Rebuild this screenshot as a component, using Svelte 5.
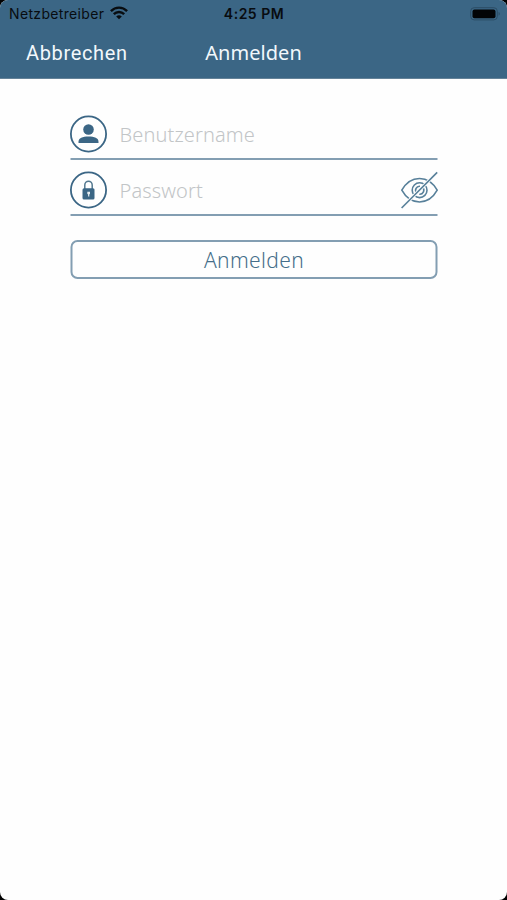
<script>
  let username = $state('');
  let password = $state('');
</script>

<div class="device">
  <main class="screen">
    <header>
      <div class="status">
        <div class="carrier">
          <span class="carrier-name">Netzbetreiber</span>
          <svg width="18" height="14" viewBox="0 0 18 14" fill="none" stroke="#080c10" stroke-width="2.4">
            <path d="M.9 5.1C5.5.5 12.5.5 17.1 5.1" />
            <path d="M3.8 8.2C6.8 5.3 11.2 5.3 14.2 8.2" />
            <path d="M6.2 10.5Q9 8.1 11.8 10.5L9 13.2Z" fill="#080c10" stroke="none" />
          </svg>
        </div>
        <span class="time">4:25 PM</span>
        <svg class="battery" width="31" height="14" viewBox="0 0 31 14">
          <rect x=".7" y=".7" width="26.6" height="12.2" rx="3.5" fill="none" stroke="#2c4d65" />
          <rect x="2.5" y="2.5" width="23" height="8.8" rx="2" fill="#020406" />
          <path d="M28.7 4.8q2 2 0 4Z" fill="#29485e" />
        </svg>
      </div>
      <nav>
        <button class="cancel">Abbrechen</button>
        <h1>Anmelden</h1>
      </nav>
    </header>

    <form>
      <label class="field">
        <svg width="38" height="38" viewBox="0 0 38 38">
          <circle cx="19" cy="19" r="17.6" fill="none" stroke="#3b6685" stroke-width="1.8" />
          <circle cx="19" cy="14.5" r="5.3" fill="#3b6685" />
          <path d="M9 28v-1.2c0-3.8 4-5.3 10-5.3s10 1.5 10 5.3V28Z" fill="#3b6685" />
        </svg>
        <input type="text" placeholder="Benutzername" bind:value={username} />
      </label>
      <label class="field">
        <svg width="38" height="38" viewBox="0 0 38 38">
          <circle cx="19" cy="19" r="17.6" fill="none" stroke="#3b6685" stroke-width="1.8" />
          <path d="M15.3 18v-4.1a3.7 3.7 0 0 1 7.4 0V18" fill="none" stroke="#53788f" stroke-width="1.5" />
          <rect x="13" y="17.2" width="12" height="11.3" rx="1.5" fill="#3b6685" />
          <path d="M17.8 20.7h2.7v2.1l-.7.8v2h-1.2v-2l-.8-.8Z" fill="#e5edf1" />
        </svg>
        <input type="password" placeholder="Passwort" bind:value={password} />
        <svg class="eye" width="38" height="38" viewBox="0 0 38 38" fill="none" stroke="#58809a" stroke-width="1.6">
          <path d="M1.3 19.2C10 3.5 28 3.5 36.7 19.2C28 34.9 10 34.9 1.3 19.2Z" />
          <circle cx="19.1" cy="19.2" r="7.4" />
          <path d="M16.1 21.9A4 4 0 0 1 19.5 15.3M22.3 16.6A4 4 0 0 1 18.8 23.2" />
          <path d="M1.1 37L36.7 1.4" stroke="#fefefe" stroke-width="3.4" />
          <path d="M1.1 37L36.7 1.4" stroke-width="1.6" />
        </svg>
      </label>
      <button class="submit" type="button">Anmelden</button>
    </form>
  </main>
</div>

<style>
  :global(body) { margin: 0; background: #000; }
  * { box-sizing: border-box; }
  .device { height: 900px; background: #000; }
  .screen { height: 900px; overflow: hidden; border-radius: 8px; background: #fefefe; font-family: "Noto Sans", sans-serif; }
  header { height: 79px; background: #3b6685; border-bottom: 1px solid #648298; }
  .status { height: 27px; display: grid; grid-template-columns: 1fr auto 1fr; align-items: center; padding: 0 6px 0 9px; font-family: Inter, sans-serif; color: #080c10; }
  .carrier { display: flex; align-items: center; gap: 6px; }
  .carrier-name { font-size: 14px; letter-spacing: .34px; }
  .carrier svg { margin-top: -2px; }
  .time { margin-left: -2px; font-size: 14px; font-weight: 600; letter-spacing: .5px; }
  .battery { justify-self: end; }
  nav { height: 51px; display: grid; grid-template-columns: 1fr auto 1fr; align-items: center; padding: 0 26px; }
  button { margin: 0; padding: 0; border: 0; background: none; }
  .cancel { justify-self: start; color: #f2f8fc; font: 400 20px/30px Roboto, sans-serif; letter-spacing: .65px; }
  h1 { margin: 0; color: #f2f8fc; font-size: 20px; line-height: 30px; font-weight: 400; letter-spacing: .05px; }
  form { width: 367px; margin: 27px auto 0; transform: translateX(.5px); }
  .field { height: 54px; margin-bottom: 2px; padding-top: 4px; display: flex; align-items: center; border-bottom: 2px solid #839eb2; }
  .field svg { flex: none; margin-left: -1px; }
  .field .eye { margin-right: -1px; }
  input { min-width: 0; flex: 1; height: 34px; margin: 0 0 0 12px; padding: 0; border: 0; outline: 0; background: transparent; color: #3b6685; font: 300 20px/30px "Noto Sans", sans-serif; letter-spacing: .12px; }
  input::placeholder { color: #c2c5c7; opacity: 1; }
  .submit { display: block; width: 100%; height: 39px; margin-top: 24px; border: 2px solid #839eb2; border-radius: 7px; color: #456e8a; font: 300 21px/34px "Noto Sans", sans-serif; letter-spacing: .35px; }
</style>
